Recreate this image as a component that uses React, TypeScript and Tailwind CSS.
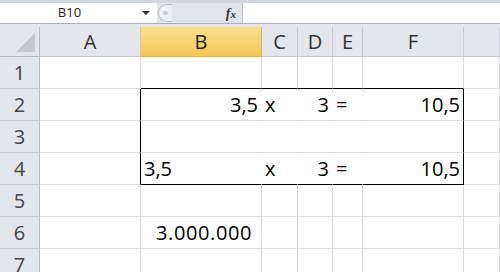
import React from 'react';

const cols = ['A', 'B', 'C', 'D', 'E', 'F', ''];

type Cell = { t?: string; align?: 'l' | 'r'; pad?: string };

// border rules for the B2:F4 box (col 0 = A, 1 = B ... 5 = F)
function boxBorders(row: number, col: number) {
  const inBox = row >= 2 && row <= 4 && col >= 1 && col <= 5;
  let r = 'border-r-[#dadcdd]';
  let b = 'border-b-[#dadcdd]';
  if (inBox && col < 5) r = 'border-r-white';
  if (row >= 2 && row <= 4 && (col === 0 || col === 5)) r = 'border-r-black';
  if ((row === 1 || row === 4) && col >= 1 && col <= 5) b = 'border-b-black';
  return `${r} ${b}`;
}

const data: Record<string, Cell> = {
  '2-1': { t: '3,5', align: 'r' },
  '2-2': { t: 'x', align: 'l' },
  '2-3': { t: '3', align: 'r' },
  '2-4': { t: '=', align: 'l' },
  '2-5': { t: '10,5', align: 'r' },
  '4-1': { t: '3,5', align: 'l' },
  '4-2': { t: 'x', align: 'l' },
  '4-3': { t: '3', align: 'r' },
  '4-4': { t: '=', align: 'l' },
  '4-5': { t: '10,5', align: 'r' },
  '6-1': { t: '3.000.000', align: 'r', pad: 'pr-[9px] tracking-[0.6px]' },
};

export default function App() {
  const rows = [1, 2, 3, 4, 5, 6, 7];
  return (
    <div
      className="w-[500px] h-[272px] overflow-hidden bg-white text-black"
      style={{ fontFamily: '"Open Sans", "Noto Sans", sans-serif' }}
    >
      {/* Formula bar */}
      <div className="h-[3px] bg-[#d3d7dc]" />
      <div className="flex h-[21px] border-b border-[#a9afb6] bg-white">
        <div className="relative flex w-[157px] items-center justify-center text-[13px] text-[#222]">
          <span className="ml-[-18px]">B10</span>
          <span className="absolute right-[7px] top-[8px] h-0 w-0 border-x-[4px] border-t-[4px] border-x-transparent border-t-[#333]" />
        </div>
        <div className="flex w-[85px] items-center bg-[#e2e5e9]">
          <div className="ml-[1px] flex h-[18px] w-[14px] items-center justify-center rounded-l-full border border-r-0 border-[#b9bec4] bg-[#edf0f3]">
            <span className="h-[4px] w-[5px] rounded-full bg-[#c6cbd1]" />
          </div>
          <span
            className="ml-auto mr-[6px] text-[14px] italic font-bold text-[#333]"
            style={{ fontFamily: '"Liberation Serif", serif' }}
          >
            f<span className="text-[11px]">x</span>
          </span>
        </div>
        <div className="flex-1 border-l border-[#b9bec4] bg-white" />
      </div>
      <div className="h-[3px] bg-[#e3e6ea]" />

      {/* Grid */}
      <div className="grid grid-cols-[40px_101px_121px_36px_35px_30px_101px_1fr]">
        {/* column headers */}
        <div className="relative h-[30px] border-r border-b border-[#b5bac0] bg-[#e3e6ea]">
          <div className="absolute right-[4px] bottom-[4px] h-0 w-0 border-l-[19px] border-b-[19px] border-l-transparent border-b-[#c4c8cd]" />
        </div>
        {cols.map((c, i) => (
          <div
            key={c + i}
            className={`flex h-[30px] items-center justify-center border-r border-b text-[20px] ${
              c === 'B'
                ? 'border-[#e2b248] bg-gradient-to-b from-[#fbe08c] to-[#f4c657] text-[#222]'
                : 'border-[#c6cad0] bg-[#e3e6ea] text-[#333]'
            }`}
          >
            {c}
          </div>
        ))}
        {/* rows */}
        {rows.map((r) => (
          <React.Fragment key={r}>
            <div className="flex h-[32px] items-center justify-center border-r border-b border-r-[#b5bac0] border-b-[#c6cad0] bg-[#e3e6ea] text-[20px] text-[#444]">
              {r}
            </div>
            {cols.map((_, ci) => {
              const cell = data[`${r}-${ci}`];
              const b = boxBorders(r, ci);
              return (
                <div
                  key={ci}
                  className={`flex h-[32px] items-center border-r border-b text-[20px] leading-none ${b} ${
                    cell?.align === 'r' ? 'justify-end' : 'justify-start'
                  } ${cell?.pad ?? (cell?.align === 'r' ? 'pr-[3px]' : 'pl-[3px]')}`}
                >
                  {cell?.t}
                </div>
              );
            })}
          </React.Fragment>
        ))}
      </div>
    </div>
  );
}
